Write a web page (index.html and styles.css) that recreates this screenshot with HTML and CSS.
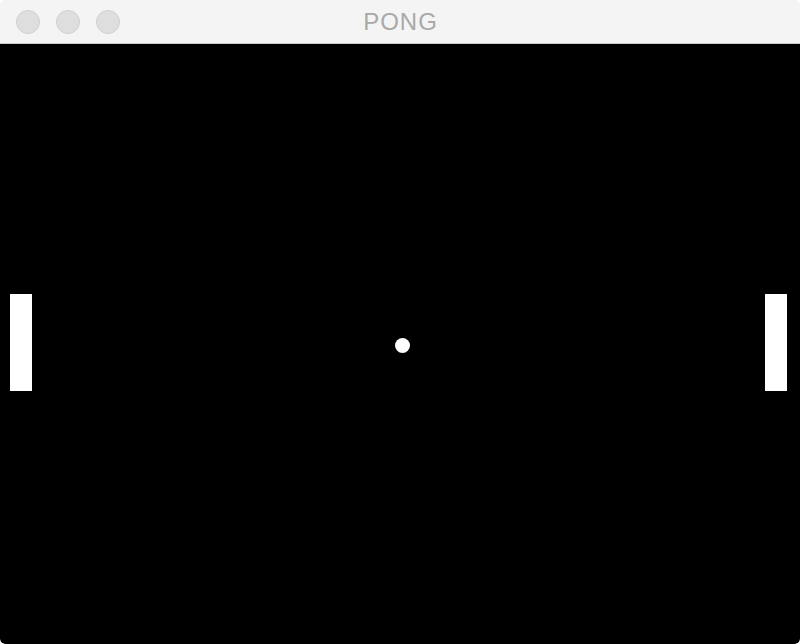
FILE: index.html
```html
<!DOCTYPE html>
<html>
<head>
<meta charset="utf-8">
<title>PONG</title>
<link rel="stylesheet" href="styles.css">
</head>
<body>
<div class="window">
  <div class="titlebar">
    <div class="lights">
      <span class="light"></span>
      <span class="light"></span>
      <span class="light"></span>
    </div>
    <div class="title">PONG</div>
  </div>
  <div class="game">
    <div class="paddle paddle-left"></div>
    <div class="ball"></div>
    <div class="paddle paddle-right"></div>
  </div>
</div>
</body>
</html>
```

FILE: styles.css
```css
html, body {
  margin: 0;
  padding: 0;
  background: #ffffff;
}
.window {
  width: 800px;
  height: 644px;
  border-radius: 5px;
  overflow: hidden;
  display: flex;
  flex-direction: column;
}
.titlebar {
  height: 43px;
  flex: none;
  background: #f4f4f4;
  border-bottom: 1px solid #c9c9c9;
  position: relative;
  display: flex;
  align-items: center;
}
.lights {
  display: flex;
  gap: 16px;
  padding-left: 16px;
}
.light {
  width: 22px;
  height: 22px;
  border-radius: 50%;
  background: #dedede;
  border: 1px solid #d0d0d0;
}
.title {
  position: absolute;
  left: 0;
  right: 0;
  top: 0;
  height: 43px;
  line-height: 44px;
  text-align: center;
  font-family: "Liberation Sans", Arial, sans-serif;
  font-size: 24px;
  letter-spacing: 1px;
  text-indent: 1px;
  color: #a9a9a9;
}
.game {
  flex: 1;
  background: #000000;
  position: relative;
  border-bottom-left-radius: 5px;
  border-bottom-right-radius: 5px;
}
.paddle {
  position: absolute;
  top: 250px;
  width: 22px;
  height: 97px;
  background: #ffffff;
}
.paddle-left { left: 10px; }
.paddle-right { left: 765px; }
.ball {
  position: absolute;
  left: 395px;
  top: 294px;
  width: 15px;
  height: 15px;
  border-radius: 50%;
  background: #ffffff;
}
```
